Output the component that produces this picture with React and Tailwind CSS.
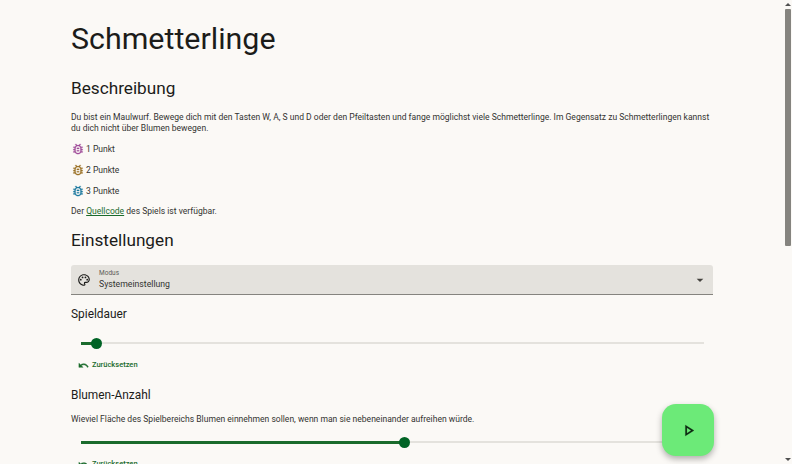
import { MdOutlinePalette, MdArrowDropDown } from "react-icons/md";

const BugIcon = ({ className }) => (
  <svg viewBox="0 0 24 24" width="14" height="14" fill="currentColor" stroke="currentColor" strokeWidth="0.3" className={className}>
    <path d="M20 8h-2.81c-.45-.78-1.07-1.45-1.82-1.96L17 4.41 15.59 3l-2.17 2.17C12.96 5.06 12.49 5 12 5s-.96.06-1.41.17L8.41 3 7 4.41l1.62 1.63C7.88 6.55 7.26 7.22 6.81 8H4v2h2.09c-.05.33-.09.66-.09 1v1H4v2h2v1c0 .34.04.67.09 1H4v2h2.81c1.04 1.79 2.97 3 5.19 3s4.15-1.21 5.19-3H20v-2h-2.09c.05-.33.09-.66.09-1v-1h2v-2h-2v-1c0-.34-.04-.67-.09-1H20V8zm-4 4v3c0 .22-.03.47-.07.7l-.1.65-.37.65c-.72 1.24-2.04 2-3.46 2s-2.74-.77-3.46-2l-.37-.64-.1-.65C8.03 15.47 8 15.22 8 15v-4c0-.22.03-.47.07-.7l.1-.65.37-.65c.3-.52.72-.97 1.21-1.31l.57-.39.74-.18c.31-.08.63-.12.94-.12.32 0 .63.04.95.12l.68.16.61.42c.48.33.89.77 1.19 1.28l.38.65.1.65c.04.22.07.47.07.69v1zm-6 2h4v2h-4zm0-4h4v2h-4z" />
  </svg>
);

const UndoIcon = () => (
  <svg viewBox="0 0 24 24" width="11" height="11" fill="currentColor" stroke="currentColor" strokeWidth="1">
    <path d="M12.5 8c-2.65 0-5.05.99-6.9 2.6L2 7v9h9l-3.62-3.62c1.39-1.16 3.16-1.88 5.12-1.88 3.54 0 6.55 2.31 7.6 5.5l2.37-.78C21.08 11.03 17.15 8 12.5 8z" />
  </svg>
);

const Points = ({ color, label }) => (
  <div className="flex items-center h-[16px] mb-[5px]">
    <BugIcon className={color} />
    <span className="ml-[1px]">{label}</span>
  </div>
);

const Slider = ({ percent }) => (
  <div className="relative h-[12px] ml-[10px] mr-[9px] flex items-center">
    <div className="w-full h-[2px] bg-[#e4e2dd]" />
    <div className="absolute left-0 h-[3px] bg-[#1a6b2c]" style={{ width: `${percent}%` }} />
    <div className="absolute size-[11px] rounded-full bg-[#006325] -ml-[5px]" style={{ left: `${percent}%` }} />
  </div>
);

const Reset = () => (
  <button className="flex items-center gap-[3px] ml-[7px] h-[14px] text-[7.5px] font-medium text-[#1a6b2c]">
    <UndoIcon />
    Zurücksetzen
  </button>
);

export default function App() {
  return (
    <div className="relative h-[464px] overflow-hidden bg-[#fbf9f6] text-[#1c1c1a] font-['Roboto',sans-serif]">
      <div className="w-[642px] ml-[71px]">
        <h1 className="pt-[19px] text-[30.4px] leading-[40px]">Schmetterlinge</h1>
        <h2 className="mt-[17px] text-[17.2px] leading-[24px]">Beschreibung</h2>
        <div className="mt-[12px] text-[8.55px] leading-[11px] text-[#333331]">
          <p>
            Du bist ein Maulwurf. Bewege dich mit den Tasten W, A, S und D oder den Pfeiltasten und fange möglichst viele Schmetterlinge. Im Gegensatz zu Schmetterlingen kannst du dich nicht über Blumen bewegen.
          </p>
          <div className="mt-[7px]">
            <Points color="text-[#a14f9b]" label="1 Punkt" />
            <Points color="text-[#9c7328]" label="2 Punkte" />
            <Points color="text-[#1f7aa0]" label="3 Punkte" />
          </div>
          <p className="mt-[7px]">
            Der <a className="underline text-[#1a6b2c]">Quellcode</a> des Spiels ist verfügbar.
          </p>
        </div>
        <h2 className="mt-[11px] text-[17.2px] leading-[24px]">Einstellungen</h2>
        <div className="mt-[13px] h-[30px] flex items-center bg-[#e4e2dd] border-b border-[#85847f] rounded-t-[3px]">
          <MdOutlinePalette size={14} className="ml-[6px]" />
          <div className="ml-[8px] flex-1">
            <div className="text-[6.5px] leading-[9px] text-[#5c5b57]">Modus</div>
            <div className="text-[8.7px] leading-[12px] text-[#333331]">Systemeinstellung</div>
          </div>
          <MdArrowDropDown size={16} className="mr-[5px] text-[#44433f]" />
        </div>
        <h3 className="mt-[11px] text-[11.9px] leading-[16px]">Spieldauer</h3>
        <div className="mt-[15px]">
          <Slider percent={2.4} />
        </div>
        <div className="mt-[9px]">
          <Reset />
        </div>
        <h3 className="mt-[15px] text-[11.9px] leading-[16px]">Blumen-Anzahl</h3>
        <p className="mt-[10px] text-[8.55px] leading-[12px] text-[#333331]">
          Wieviel Fläche des Spielbereichs Blumen einnehmen sollen, wenn man sie nebeneinander aufreihen würde.
        </p>
        <div className="mt-[11px]">
          <Slider percent={51.9} />
        </div>
        <div className="mt-[9px]">
          <Reset />
        </div>
      </div>
      <button className="absolute left-[662px] top-[404px] size-[52px] rounded-[14px] bg-[#6cea78] flex items-center justify-center shadow-[0_3px_6px_rgba(0,0,0,0.3)]">
        <svg viewBox="0 0 24 24" width="19" height="19" fill="#0e2a12" stroke="#0e2a12" strokeWidth="0.2">
          <path d="M10 8.64L15.27 12 10 15.36V8.64M8 5v14l11-7L8 5z" />
        </svg>
      </button>
      {/* scrollbar */}
      <div className="absolute right-0 top-0 bottom-0 w-[8px]">
        <div className="mx-auto mt-[3px] w-0 h-0 border-x-[3px] border-x-transparent border-b-[3px] border-b-[#505050]" />
        <div className="mx-auto mt-[3px] w-[6px] h-[237px] bg-[#85847f] rounded-[1px]" />
      </div>
      <div className="absolute right-[1px] bottom-[3px] w-0 h-0 border-x-[3px] border-x-transparent border-t-[3px] border-t-[#505050]" />
    </div>
  );
}
